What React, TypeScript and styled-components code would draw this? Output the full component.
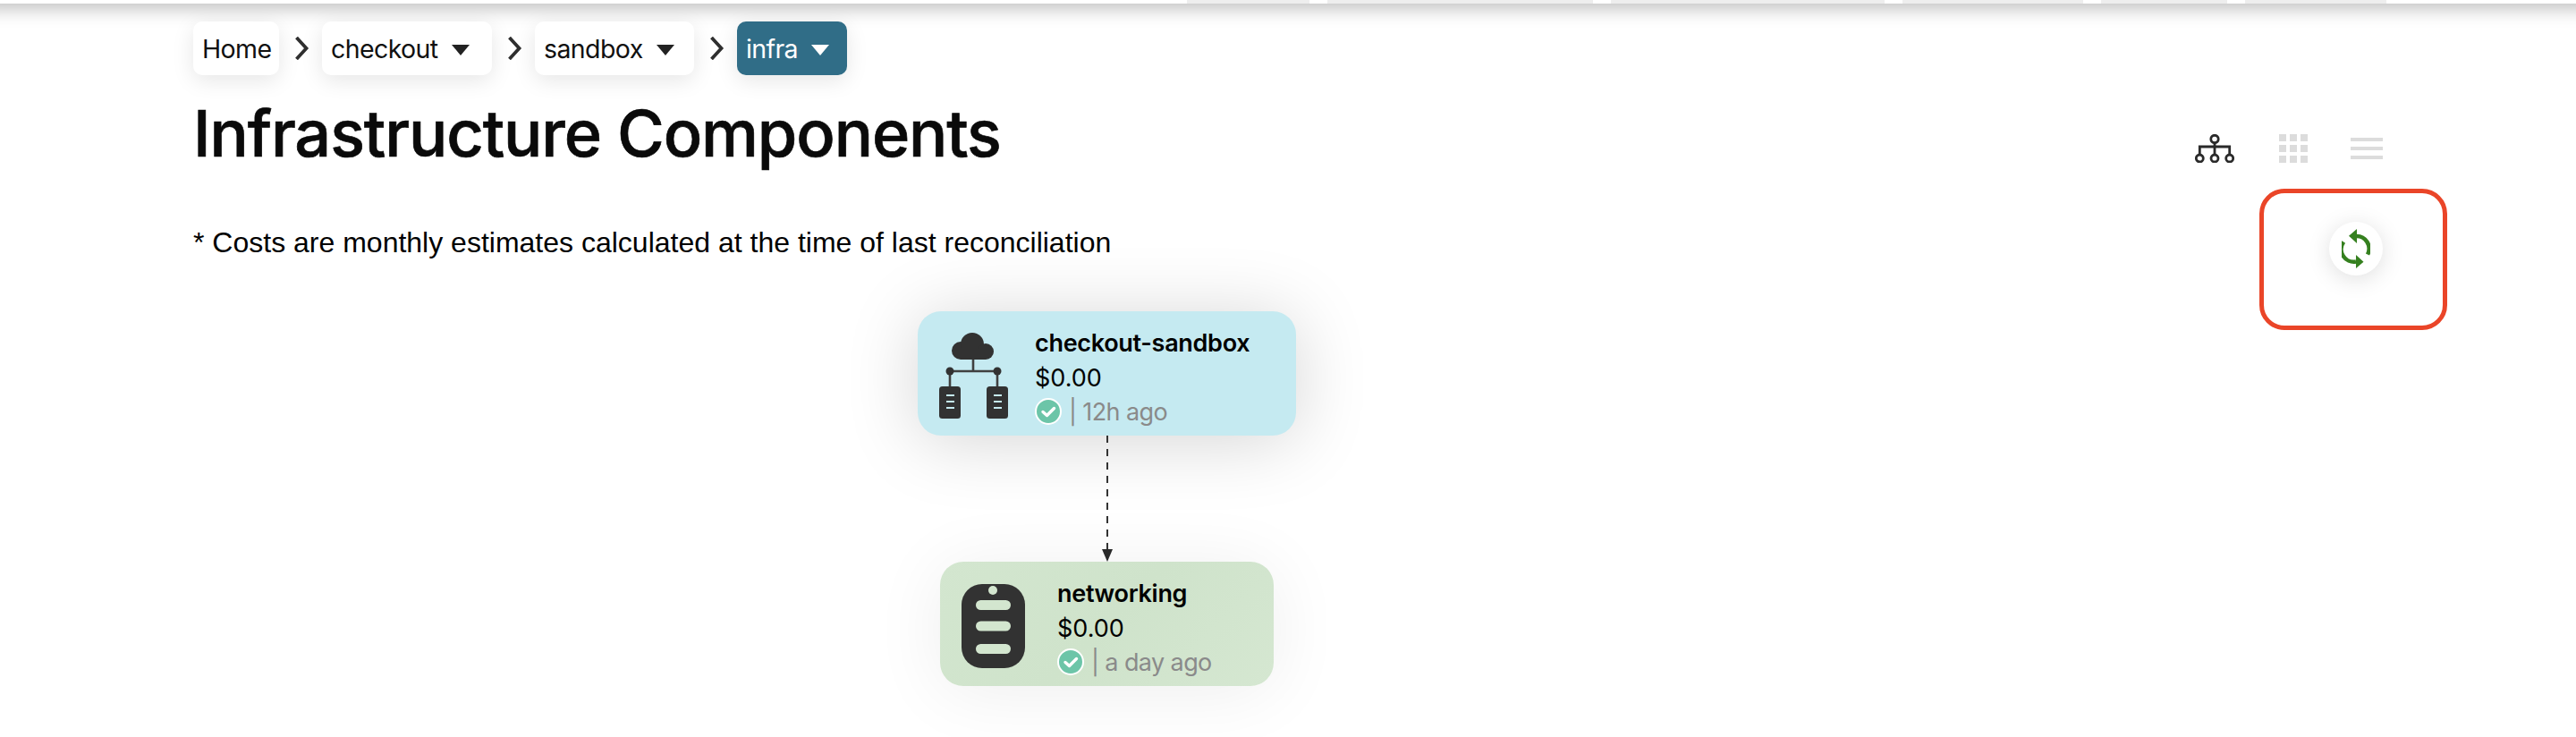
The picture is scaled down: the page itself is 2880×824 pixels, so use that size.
import React from "react";
import styled, { createGlobalStyle } from "styled-components";

const Global = createGlobalStyle`
  html, body { margin: 0; padding: 0; background: #fff; }
  body { font-family: Inter, "Liberation Sans", sans-serif; color: #000; overflow: hidden; }
`;

const Page = styled.div`
  width: 2880px;
  height: 824px;
  overflow: hidden;
  display: flex;
  flex-direction: column;
`;

const TopBar = styled.header`
  height: 4px;
  flex: none;
  background: #fff;
  box-shadow: 0 -14px 20px 20px rgba(0, 0, 0, 0.25);
  display: flex;
  gap: 20px;
  padding-left: 1327px;
`;

const TopTab = styled.span<{ $w: number }>`
  width: ${(p) => p.$w}px;
  background: #eeeeee;
`;

const Main = styled.main`
  flex: 1;
  padding: 20px 144px 0 216px;
  display: flex;
  flex-direction: column;
`;

const Crumbs = styled.nav`
  display: flex;
  align-items: center;
  height: 60px;
`;

const Crumb = styled.div<{ $w: number; $active?: boolean }>`
  width: ${(p) => p.$w}px;
  height: 60px;
  box-sizing: border-box;
  padding-left: 10px;
  border-radius: 10px;
  display: flex;
  align-items: center;
  gap: 15px;
  font-size: 28.5px;
  letter-spacing: -0.6px;
  background: ${(p) => (p.$active ? "#306d87" : "#fff")};
  color: ${(p) => (p.$active ? "#fff" : "#111")};
  box-shadow: 0 6px 24px rgba(0, 0, 0, 0.1);
`;

const Caret = styled.i<{ $light?: boolean }>`
  width: 0;
  height: 0;
  margin-top: 4px;
  border-left: 10.5px solid transparent;
  border-right: 10.5px solid transparent;
  border-top: 12px solid ${(p) => (p.$light ? "#fff" : "#222")};
`;

const Sep = styled.svg`
  width: 48px;
  height: 26px;
  flex: none;
`;

const TitleRow = styled.div`
  display: flex;
  justify-content: space-between;
  align-items: flex-start;
  margin-top: 20px;
`;

const Title = styled.h1`
  margin: 0;
  font-size: 72px;
  line-height: 90px;
  font-weight: 500;
  letter-spacing: -1.1px;
  -webkit-text-stroke: 0.7px #0a0a0a;
  color: #0a0a0a;
`;

const Toggles = styled.div`
  display: flex;
  align-items: center;
  gap: 48px;
  margin: 46px 72px 0 0;
`;

const ToggleIcon = styled.svg<{ $extra?: number }>`
  display: block;
  flex: none;
  margin-right: ${(p) => p.$extra ?? 0}px;
`;

const Note = styled.p`
  margin: 57px 0 0;
  font-family: "Liberation Sans", Arial, sans-serif;
  font-size: 32px;
  line-height: 40px;
  color: #000;
`;

const Canvas = styled.section`
  position: relative;
  flex: 1;
  margin-top: 57px;
`;

const FlowColumn = styled.div`
  width: 2043px;
  display: flex;
  flex-direction: column;
  align-items: center;
`;

const Node = styled.article<{ $w: number; $bg: string; $shadow: number }>`
  width: ${(p) => p.$w}px;
  height: 139px;
  box-sizing: border-box;
  border-radius: 26px;
  background: ${(p) => p.$bg};
  box-shadow: 0 6px 80px rgba(0, 0, 0, ${(p) => p.$shadow});
  display: grid;
  grid-template-columns: 131px 1fr;
  align-items: center;
`;

const NodeIcon = styled.svg`
  display: block;
  margin: 4px 0 0 24px;
`;

const NodeText = styled.div`
  display: flex;
  flex-direction: column;
  padding-top: 7px;
`;

const NodeName = styled.div`
  font-size: 27px;
  line-height: 39px;
  font-weight: 600;
  letter-spacing: -0.3px;
  color: #000;
`;

const NodeCost = styled.div`
  font-size: 27px;
  line-height: 39px;
  color: #000;
`;

const NodeStatus = styled.div`
  display: flex;
  align-items: center;
  gap: 8px;
  font-size: 27px;
  letter-spacing: -0.6px;
  line-height: 37px;
  color: #8a8a8a;
`;

const CheckBadge = styled.svg`
  display: block;
  flex: none;
`;

const Connector = styled.svg`
  display: block;
  flex: none;
`;

const Highlight = styled.div`
  position: absolute;
  right: 0;
  top: -137px;
  width: 210px;
  height: 158px;
  box-sizing: border-box;
  border: 5px solid #ea4528;
  border-radius: 28px;
  display: flex;
  justify-content: center;
  padding-top: 32px;
`;

const RefreshButton = styled.button`
  width: 60px;
  height: 60px;
  margin-left: 6px;
  padding: 0;
  border: 0;
  border-radius: 50%;
  background: #fff;
  box-shadow: 0 4px 26px rgba(0, 0, 0, 0.13);
  display: flex;
  align-items: center;
  justify-content: center;
`;

const Separator = () => (
  <Sep viewBox="0 0 48 26">
    <path d="M19.5 1 L30.5 13 L19.5 25" fill="none" stroke="#2f2f2f" strokeWidth="3.8" />
  </Sep>
);

const Check = () => (
  <CheckBadge width="30" height="30" viewBox="0 0 30 30">
    <circle cx="15" cy="15" r="14" fill="#6cc5a8" stroke="#fff" strokeWidth="2" />
    <path d="M9 15.5 L13.5 19.5 L21.5 11.5" fill="none" stroke="#fff" strokeWidth="3.4" strokeLinecap="round" strokeLinejoin="round" />
  </CheckBadge>
);

const CloudIcon = () => (
  <NodeIcon width="77" height="96" viewBox="0 0 77 96">
    <g fill="#323232">
      <circle cx="24" cy="20" r="10" />
      <circle cx="37" cy="13" r="13" />
      <circle cx="52" cy="21" r="9" />
      <rect x="24" y="18" width="28" height="12" />
    </g>
    <path d="M38 30 V43 M12 43 H65 M12 43 V60 M65 43 V60" stroke="#404040" strokeWidth="2.6" fill="none" />
    <circle cx="12" cy="43" r="4.5" fill="#323232" />
    <circle cx="65" cy="43" r="4.5" fill="#323232" />
    <rect x="0" y="60" width="24" height="36" rx="3.5" fill="#323232" />
    <rect x="53" y="60" width="24" height="36" rx="3.5" fill="#323232" />
    <path d="M8 70 H17 M8 77 H17 M8 84 H17 M61 70 H70 M61 77 H70 M61 84 H70" stroke="#c5eaf1" strokeWidth="2" />
  </NodeIcon>
);

const GatewayIcon = () => (
  <NodeIcon width="71" height="94" viewBox="0 0 71 94">
    <rect width="71" height="94" rx="23" fill="#323232" />
    <circle cx="35" cy="7" r="5" fill="#d3e6cf" />
    <rect x="16" y="18" width="39" height="11" rx="5.5" fill="#d3e6cf" />
    <rect x="16" y="41.5" width="39" height="11" rx="5.5" fill="#d3e6cf" />
    <rect x="16" y="67" width="39" height="11" rx="5.5" fill="#d3e6cf" />
  </NodeIcon>
);

export default function App() {
  return (
    <Page>
      <Global />
      <TopBar>
        {[137, 297, 306, 202, 141, 158].map((w, i) => (
          <TopTab key={i} $w={w} />
        ))}
      </TopBar>
      <Main>
        <Crumbs>
          <Crumb $w={96}>Home</Crumb>
          <Separator />
          <Crumb $w={190}>
            checkout <Caret />
          </Crumb>
          <Separator />
          <Crumb $w={178}>
            sandbox <Caret />
          </Crumb>
          <Separator />
          <Crumb $w={123} $active>
            infra <Caret $light />
          </Crumb>
        </Crumbs>
        <TitleRow>
          <Title>Infrastructure Components</Title>
          <Toggles>
            <ToggleIcon width="44" height="32" viewBox="0 0 44 32" $extra={2}>
              <g fill="none" stroke="#2a2a2a" strokeWidth="2.8">
                <circle cx="22" cy="5.5" r="4.2" />
                <circle cx="5.3" cy="27" r="4" />
                <circle cx="22" cy="27" r="4" />
                <circle cx="38.7" cy="27" r="4" />
                <path d="M22 10 V22.5 M5.3 22.5 V14 H38.7 V22.5" />
              </g>
            </ToggleIcon>
            <ToggleIcon width="32" height="32" viewBox="0 0 32 32">
              <path
                d="M0 0h8v8H0zM12 0h8v8h-8zM24 0h8v8h-8zM0 12h8v8H0zM12 12h8v8h-8zM24 12h8v8h-8zM0 24h8v8H0zM12 24h8v8h-8zM24 24h8v8h-8z"
                fill="#dcdcdc"
              />
            </ToggleIcon>
            <ToggleIcon width="36" height="24" viewBox="0 0 36 24">
              <path d="M0 0h36v4H0zM0 10h36v4H0zM0 20h36v4H0z" fill="#dcdcdc" />
            </ToggleIcon>
          </Toggles>
        </TitleRow>
        <Note>* Costs are monthly estimates calculated at the time of last reconciliation</Note>
        <Canvas>
          <FlowColumn>
            <Node $w={423} $bg="#c5eaf1" $shadow={0.17}>
              <CloudIcon />
              <NodeText>
                <NodeName>checkout-sandbox</NodeName>
                <NodeCost>$0.00</NodeCost>
                <NodeStatus>
                  <Check />| 12h ago
                </NodeStatus>
              </NodeText>
            </Node>
            <Connector width="14" height="141" viewBox="0 0 14 141">
              <path d="M7 0 V128" stroke="#333" strokeWidth="2" strokeDasharray="8 7" />
              <path d="M1 127 H13 L7 141 Z" fill="#2a2a2a" />
            </Connector>
            <Node $w={373} $bg="linear-gradient(135deg, #d3e6cf, #cfe3cb 50%, #d5e7d1)" $shadow={0.07}>
              <GatewayIcon />
              <NodeText>
                <NodeName>networking</NodeName>
                <NodeCost>$0.00</NodeCost>
                <NodeStatus>
                  <Check />| a day ago
                </NodeStatus>
              </NodeText>
            </Node>
          </FlowColumn>
          <Highlight>
            <RefreshButton aria-label="Refresh">
              <svg width="32" height="44" viewBox="0 0 32 44">
                <path d="M16 8 A14 14 0 0 1 29 28.5 M2.2 14.5 A14 14 0 0 0 16 36.5" fill="none" stroke="#35801f" strokeWidth="4.6" />
                <path d="M8 7.7 L17 0 V16 Z M24.5 36.7 L16 29 V44 Z" fill="#35801f" />
              </svg>
            </RefreshButton>
          </Highlight>
        </Canvas>
      </Main>
    </Page>
  );
}
